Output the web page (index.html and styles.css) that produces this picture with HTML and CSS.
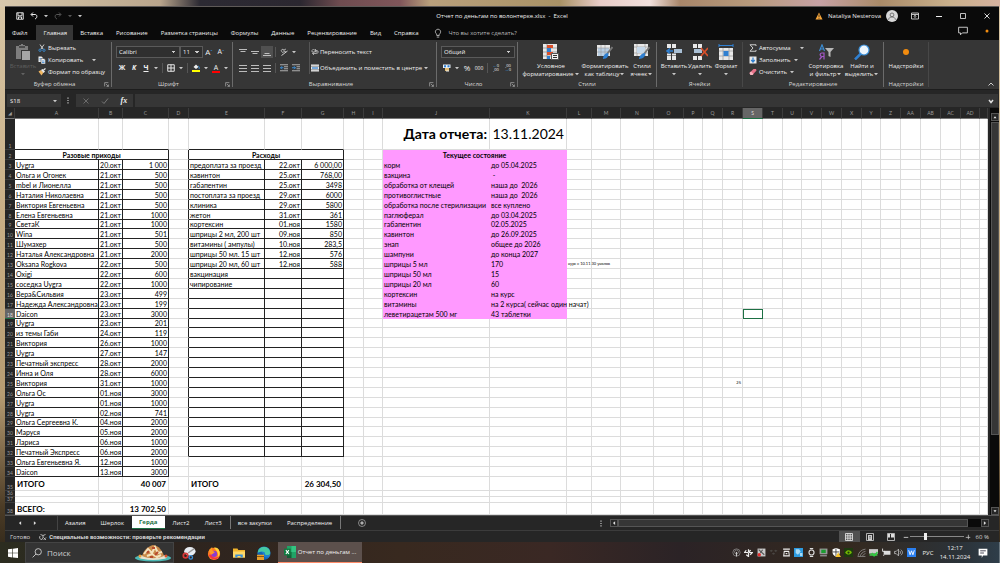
FILE: index.html
```html
<!DOCTYPE html>
<html lang="ru">
<head>
<meta charset="utf-8">
<title>Отчет по деньгам по волонтерке.xlsx - Excel</title>
<link rel="stylesheet" href="styles.css">
</head>
<body>
<svg class="sprite" aria-hidden="true">
  <symbol id="caret" viewBox="0 0 6 4"><path d="M1 1h4L3 3.2z" fill="#c8c8c8"/></symbol>
  <symbol id="save" viewBox="0 0 16 16"><path d="M1.500 1.500h13v13h-13zM4 2v5.500h8V2M5 14v-4h6v4" fill="none" stroke="#eee" stroke-width="1.800"/></symbol>
  <symbol id="undo" viewBox="0 0 16 16"><path d="M6 1L2 5l4 4M2.500 5H10c5 0 5 7 0 9" fill="none" stroke="#eee" stroke-width="2"/></symbol>
  <symbol id="redo" viewBox="0 0 16 16"><path d="M10 1l4 4-4 4M13.500 5H6C1 5 1 12 6 14" fill="none" stroke="#555" stroke-width="2"/></symbol>
  <symbol id="paste" viewBox="0 0 16 16"><path d="M1 2h3V1h2V0h2v1h2v1h3v4H6v9H1z" fill="#7d7d7d"/><path d="M7 7h8v9H7z" fill="#a5a5a5"/><path d="M4 2h6v2H4z" fill="#4a4a4a"/></symbol>
  <symbol id="cut" viewBox="0 0 16 16"><path d="M4 1l6 9M12 1l-6 9" stroke="#ddd" stroke-width="1.800"/><circle cx="4" cy="12.500" r="2.300" fill="none" stroke="#3b8fd8" stroke-width="1.800"/><circle cx="12" cy="12.500" r="2.300" fill="none" stroke="#3b8fd8" stroke-width="1.800"/></symbol>
  <symbol id="copy" viewBox="0 0 16 16"><path d="M1 1h6l3 3v8H1z" fill="#eee"/><path d="M6 5h6l3 3v8H6z" fill="#eee" stroke="#363636"/><path d="M3 5h3M3 8h2M8 10h5M8 13h5" stroke="#2f7fd0" stroke-width="1.500"/></symbol>
  <symbol id="brush" viewBox="0 0 16 16"><path d="M1 7l5-3 5 5-4 6z" fill="#f0b661"/><path d="M6 4l3-2 5 5-3 3z" fill="#eee"/><path d="M11 4l4-3" stroke="#eee" stroke-width="2.500"/></symbol>
  <symbol id="borders" viewBox="0 0 16 16"><path d="M1.500 1.500h13v13h-13zM8 1v14M1 8h14" fill="none" stroke="#e6e6e6" stroke-width="2"/></symbol>
  <symbol id="fill" viewBox="0 0 16 16"><path d="M3 6l5-5 5 5-5 4z" fill="#eee"/><path d="M12 4c3 1 3 4 2 6" stroke="#3b8fd8" stroke-width="2" fill="none"/><path d="M0 12h16v4H0z" fill="#ff0"/></symbol>
  <symbol id="top" viewBox="0 0 16 16"><path d="M0 3h16M3 7h10" stroke="#ccc" stroke-width="1.800"/></symbol>
  <symbol id="mid" viewBox="0 0 16 16"><path d="M0 7h16M3 11h10" stroke="#ccc" stroke-width="1.800"/></symbol>
  <symbol id="bot" viewBox="0 0 16 16"><path d="M3 11h10M0 15h16" stroke="#ccc" stroke-width="1.800"/></symbol>
  <symbol id="lines" viewBox="0 0 16 16"><path d="M0 3h16M0 9h16M0 15h16" stroke="#ccc" stroke-width="1.800"/></symbol>
  <symbol id="outdent" viewBox="0 0 16 16"><path d="M0 1.500h16M8 5.500h8M8 9.500h8M0 13.500h16" stroke="#ccc" stroke-width="1.600"/><path d="M7 7.500H1M4 4.500l-3 3 3 3" stroke="#3b8fd8" stroke-width="2" fill="none"/></symbol>
  <symbol id="indent" viewBox="0 0 16 16"><path d="M0 1.500h16M9 5.500h7M9 9.500h7M0 13.500h16" stroke="#ccc" stroke-width="1.600"/><path d="M0 7.500h7M4 4.500l3 3-3 3" stroke="#3b8fd8" stroke-width="2" fill="none"/></symbol>
  <symbol id="rotate" viewBox="0 0 16 16"><path d="M2 5l4-3 3 5-4 2zM8 4l4-2M9 8l3-1" fill="none" stroke="#ccc" stroke-width="1.500"/><path d="M3 15L15 6" stroke="#ccc" stroke-width="2"/></symbol>
  <symbol id="wrap" viewBox="0 0 16 16"><path d="M2 5l3-3 3 3v3H2zM9 2v6h3V5H9M3 11h8c4 0 4-5 2-6M6 9l-3 2 3 3" fill="none" stroke="#bbb" stroke-width="1.700"/></symbol>
  <symbol id="merge" viewBox="0 0 16 16"><path d="M0 1h16v14H0z" fill="#e8e8e8"/><path d="M0 4.500h16M0 11.500h16" stroke="#444"/><path d="M2 8h12" stroke="#2f7fd0" stroke-width="2.500"/></symbol>
  <symbol id="money" viewBox="0 0 16 16"><path d="M0 1h15v7H0z" fill="#e8f0f8"/><path d="M2 2.500h4v4H2zM9 2.500h4v4H9z" fill="#2f7fd0"/><path d="M4 8h8v6H4z" fill="#e4bd72"/><path d="M6 14h6" stroke="#eee" stroke-width="2"/></symbol>
  <symbol id="condfmt" viewBox="0 0 16 16"><path d="M0 0h14v15H0z" fill="#e8e8e8"/><path d="M0 4h14M0 8h14M0 12h14M4 0v15" stroke="#888" stroke-width=".7"/><path d="M4 1h6v3H4zM4 8h6v3H4z" fill="#d9502b"/><path d="M4 4h4v4H4zM4 12h3v3H4z" fill="#2f7fd0"/><path d="M8.500 9.500h7v6h-7z" fill="#f5f5f5" stroke="#555"/><path d="M10 11.500h4M10 13.500h4" stroke="#333"/></symbol>
  <symbol id="fmttable" viewBox="0 0 16 16"><path d="M0 1h13v11H0z" fill="#e8e8e8"/><path d="M1 4h11v8H1z" fill="#b9cfe4"/><path d="M0 4h13M0 8h13M4 1v11M8 1v11" stroke="#999" stroke-width=".6"/><path d="M15.500 3L10 10" stroke="#777" stroke-width="2"/><path d="M6 15c0-3 2-6 5-6 1 3-1 6-5 6" fill="#2f7fd0"/></symbol>
  <symbol id="cellstyle" viewBox="0 0 16 16"><path d="M0 0h14v12H0z" fill="#e8e8e8"/><path d="M0 3h14M0 9h14M3 0v12M11 0v12" stroke="#999" stroke-width=".7"/><path d="M3 3h8v6H3z" fill="#c5d8ea"/><path d="M15.500 3L10 10" stroke="#777" stroke-width="2"/><path d="M5 15c0-3 3-6 6-6 1 3-2 6-6 6" fill="#2f7fd0"/></symbol>
  <symbol id="insert" viewBox="0 0 16 16"><path d="M1 0h4v4H1zM6 0h4v4H6zM1 12h4v4H1zM6 12h4v4H6zM1 9.500h4v2H1zM6 9.500h4v2H6z" fill="#e8e8e8"/><path d="M8 5h8v4H8z" fill="#a9bfd4"/><path d="M7 7H1M4 4.500L1 7l3 2.500" stroke="#2f7fd0" stroke-width="1.500" fill="none"/></symbol>
  <symbol id="delete" viewBox="0 0 16 16"><path d="M1 0h4v4H1zM6 0h4v4H6zM1 12h4v4H1zM6 12h4v4H6z" fill="#e8e8e8"/><path d="M2 5h8v4H2z" fill="#a9bfd4"/><path d="M9 4l7 8M16 4l-7 8" stroke="#d9502b" stroke-width="1.700"/></symbol>
  <symbol id="format" viewBox="0 0 16 16"><path d="M1 0v3M15 0v3M1 1.500h14" stroke="#2f7fd0"/><path d="M1 4h14v12H1z" fill="#e8e8e8"/><path d="M1 7h14M1 12h14M5 4v12M11 4v12" stroke="#999" stroke-width=".7"/><path d="M5.500 7h5v5h-5z" fill="#2f7fd0"/></symbol>
  <symbol id="sigma" viewBox="0 0 16 16"><path d="M14 4V1.500H2L8 8l-6 6.500h12V12" fill="none" stroke="#ddd" stroke-width="1.800"/></symbol>
  <symbol id="down" viewBox="0 0 16 16"><path d="M1 1h14v14H1z" fill="#e8e8e8"/><path d="M8 3v8M4.500 8L8 12l3.500-4" stroke="#2f7fd0" stroke-width="2.500" fill="none"/></symbol>
  <symbol id="eraser" viewBox="0 0 16 16"><path d="M1 10l8-8h5l1 3-8 9H3z" fill="#e8728a"/><path d="M1 10l3-3 5 5-2 2H3z" fill="#f6b5c0"/></symbol>
  <symbol id="sort" viewBox="0 0 16 16"><path d="M1.500 7L4 .8 6.500 7M2.300 5h3.400" stroke="#3b8fd8" stroke-width="1.100" fill="none"/><path d="M6 15.500V9H4c-2.500 0-2.500 3.500 0 3.500h2M4 12.500l-2.500 3" stroke="#a558c8" stroke-width="1.200" fill="none"/><path d="M7 4h9l-3.500 4v5l-2-1V8z" fill="#b8b8b8"/></symbol>
  <symbol id="find" viewBox="0 0 16 16"><path d="M7.500 9L1 15.500" stroke="#2f7fd0" stroke-width="2.500"/><circle cx="10" cy="6" r="5" fill="#eef6fd" stroke="#3b8fd8" stroke-width="1.200"/></symbol>
  <symbol id="dot" viewBox="0 0 16 16"><circle cx="8" cy="8" r="3" fill="#f28c0f"/></symbol>
  <symbol id="launch" viewBox="0 0 8 8"><path d="M1 7V1h6M3 3l4 4M7 4v3H4" fill="none" stroke="#bbb"/></symbol>
  <symbol id="bulb" viewBox="0 0 16 16"><path d="M6 12v-2c-4-3-2-8 2-8s6 5 2 8v2zM6 14.500h4" fill="none" stroke="#ccc" stroke-width="1.300"/></symbol>
  <symbol id="warn" viewBox="0 0 16 16"><path d="M8 1l7 14H1z" fill="#f7a63a"/><path d="M8 5v5M8 11.500v2" stroke="#222" stroke-width="1.600"/></symbol>
  <symbol id="user" viewBox="0 0 16 16"><circle cx="8" cy="8" r="8" fill="#d8d8d8"/><circle cx="8" cy="6.500" r="2.500" fill="none" stroke="#555"/><path d="M3.500 13c0-5 9-5 9 0" fill="none" stroke="#555"/></symbol>
  <symbol id="ribbonopt" viewBox="0 0 16 16"><path d="M1 2h14v12H1zM1 5h14M8 12V7M5.500 9L8 6.500 10.500 9" fill="none" stroke="#ddd" stroke-width="1.700"/></symbol>
  <symbol id="min" viewBox="0 0 16 16"><path d="M2 9h12" stroke="#eee" stroke-width="2"/></symbol>
  <symbol id="add" viewBox="0 0 16 16"><path d="M2 9h12M9 2v12" stroke="#ccc" stroke-width="2"/></symbol>
  <symbol id="max" viewBox="0 0 16 16"><path d="M3 3h10v10H3z" fill="none" stroke="#eee" stroke-width="1.600"/></symbol>
  <symbol id="close" viewBox="0 0 16 16"><path d="M3 3l10 10M13 3L3 13" stroke="#eee" stroke-width="1.800"/></symbol>
  <symbol id="check" viewBox="0 0 16 16"><path d="M2 9l4 4 8-10" fill="none" stroke="#777" stroke-width="2"/></symbol>
  <symbol id="cross" viewBox="0 0 16 16"><path d="M3 3l10 10M13 3L3 13" stroke="#6b6b6b" stroke-width="2"/></symbol>
  <symbol id="comment" viewBox="0 0 16 16"><path d="M1 2h14v9H7l-3 3v-3H1z" fill="none" stroke="#ddd" stroke-width="1.400"/></symbol>
  <symbol id="vdots" viewBox="0 0 4 12"><path d="M1 1h2v2H1zM1 5h2v2H1zM1 9h2v2H1z" fill="#ccc"/></symbol>
  <symbol id="plus" viewBox="0 0 16 16"><circle cx="8" cy="8" r="7" fill="none" stroke="#bbb" stroke-width="1.300"/><path d="M8 4.500v7M4.500 8h7" stroke="#ddd" stroke-width="2"/></symbol>
  <symbol id="left" viewBox="0 0 8 8"><path d="M5.500 1.500v5L2.500 4z" fill="#ddd"/></symbol>
  <symbol id="right" viewBox="0 0 8 8"><path d="M2.500 1.500v5l3-2.500z" fill="#ddd"/></symbol>
  <symbol id="upt" viewBox="0 0 8 8"><path d="M2 5.500h4L4 3z" fill="#eee"/></symbol>
  <symbol id="dnt" viewBox="0 0 8 8"><path d="M2 3h4L4 5.500z" fill="#eee"/></symbol>
  <symbol id="chevup" viewBox="0 0 8 8"><path d="M1.500 5.500L4 3l2.500 2.500" fill="none" stroke="#ccc"/></symbol>
  <symbol id="chevdn" viewBox="0 0 8 8"><path d="M2 3l2 2.500L6 3" fill="none" stroke="#ddd" stroke-width="1.500"/></symbol>
  <symbol id="access" viewBox="0 0 16 16"><path d="M3 3l5 2 5-2M8 5v4l-3 5M2 6l-1 4 4 4M9 9l5 5M14 9l-5 5" fill="none" stroke="#ddd" stroke-width="1.500"/></symbol>
  <symbol id="vgrid" viewBox="0 0 16 16"><path d="M1 1h14v14H1zM1 5.700h14M1 10.300h14M5.700 1v14M10.300 1v14" fill="none" stroke="#eee" stroke-width="1.600"/></symbol>
  <symbol id="vpage" viewBox="0 0 16 16"><path d="M1 1h14v14H1z" fill="none" stroke="#ddd" stroke-width="1.500"/><path d="M4 4h8v11H4z" fill="#ccc"/><path d="M6 7h4M6 10h4" stroke="#333"/></symbol>
  <symbol id="vbreak" viewBox="0 0 16 16"><path d="M1 1h14v14H1z" fill="none" stroke="#ddd" stroke-width="1.500"/><path d="M2 2h4v7H2zM8 2h6v7H8z" fill="#ddd"/></symbol>
  <symbol id="win" viewBox="0 0 16 16"><path d="M0 2l7-1v6.500H0zM8 1l8-1v7.500H8zM0 8.500h7V15l-7-1zM8 8.500h8V16l-8-1z" fill="#fff"/></symbol>
  <symbol id="lens" viewBox="0 0 16 16"><circle cx="10" cy="6" r="5" fill="none" stroke="#ddd" stroke-width="1.300"/><path d="M6.500 9.500L1 15" stroke="#ddd" stroke-width="1.300"/></symbol>
  <symbol id="dish" viewBox="0 0 36 18"><ellipse cx="18" cy="14" rx="18" ry="3.500" fill="#4cb8b4"/><ellipse cx="18" cy="13" rx="14" ry="3" fill="#e7e2cf"/><path d="M7 12C9 6 12 3 18 1c6 1 9 5 11 11-7 3-15 3-22 0" fill="#c98a4a"/><path d="M9 10l4-5 4 4 3-6 3 6 4-1M12 12l5-2 5 3 4-2" fill="none" stroke="#f4e2bd" stroke-width="2"/><path d="M12 9l2-2M20 11l3-3M17 4h3M15 13h3" stroke="#b74a2d" stroke-width="2"/><circle cx="5" cy="12" r="1.500" fill="#e89b3b"/><circle cx="31" cy="12" r="1.500" fill="#d9502b"/></symbol>
  <symbol id="snip" viewBox="0 0 16 16"><ellipse cx="9" cy="6" rx="6.500" ry="5" fill="#e8ecf2"/><path d="M7 8l7-5" stroke="#999" stroke-width="1.500"/><circle cx="4" cy="11" r="2.500" fill="none" stroke="#d93838" stroke-width="2"/><circle cx="10" cy="13" r="2" fill="none" stroke="#3b8fd8" stroke-width="1.500"/></symbol>
  <symbol id="firefox" viewBox="0 0 16 16"><circle cx="8" cy="9" r="7" fill="#ff7a1f"/><path d="M8 2c6-2 9 8 4 11 2-5-1-7-4-11" fill="#ffd23c"/><circle cx="8" cy="9" r="3.500" fill="#8a3bd1"/><path d="M2 6c1-3 3-4 4-5v4l3 2-4 3" fill="#ff9a24"/><path d="M2 10c2 6 9 7 12 2-3 2-8 2-9-2" fill="#f0304c"/></symbol>
  <symbol id="folder" viewBox="0 0 16 16"><path d="M0 2h6l1 2h9v10H0z" fill="#f3b52c"/><path d="M0 6h16v8H0z" fill="#ffd868"/><path d="M3 14v-4h10v4h-3v-2H6v2z" fill="#3a8fd6"/></symbol>
  <symbol id="edge" viewBox="0 0 16 16"><circle cx="8" cy="8" r="7.500" fill="#1c7fd1"/><path d="M1 8c0-9 14-9 14 0 0 3-5 3-6 1 1-3-5-4-8-1" fill="#45c9a4"/><path d="M1 8c4-3 6 0 6 2s2 4 6 3c-5 5-13 1-12-5" fill="#1262b3"/><path d="M0 10h8v6H0z" fill="#e8a02c"/><path d="M0 12h8" stroke="#7a4a12"/></symbol>
  <symbol id="xl" viewBox="0 0 16 16"><path d="M4 0h12v16H4z" fill="#21a366"/><path d="M10 0h6v8h-6z" fill="#33c481"/><path d="M4 8h6v8H4z" fill="#185c37"/><path d="M0 3.500h9v9H0z" fill="#107c41"/><path d="M2.500 5.500l4 5M6.500 5.500l-4 5" stroke="#fff" stroke-width="1.400"/></symbol>
  <symbol id="t-cast" viewBox="0 0 16 16"><circle cx="8" cy="8" r="6.500" fill="none" stroke="#aaa"/><circle cx="8" cy="7" r="3.500" fill="none" stroke="#aaa"/><path d="M8 7v8" stroke="#ccc" stroke-width="2"/></symbol>
  <symbol id="t-fan" viewBox="0 0 16 16"><path d="M8 2v5l4-3M9 8h6l-4 4M8 9v6l-4-3M7 8H1l3-4" fill="none" stroke="#eee" stroke-width="2.200"/></symbol>
  <symbol id="t-red" viewBox="0 0 16 16"><path d="M1 1h14v14H1z" fill="#c7c7c7"/><path d="M3 3l10 9M10 3l-4 6" stroke="#555" stroke-width="2"/><circle cx="4" cy="12" r="3" fill="#e32c2c"/></symbol>
  <symbol id="t-drop" viewBox="0 0 16 16"><path d="M4 3l3 2-3 2-3-2zM12 3l3 2-3 2-3-2zM8 8l3 2-3 2-3-2z" fill="#4a4643"/></symbol>
  <symbol id="t-at" viewBox="0 0 16 16"><path d="M2 2h12M4 6h8l1 8H3z" fill="none" stroke="#eee" stroke-width="1.800"/><path d="M6.500 9h3v2h-3z" fill="#eee"/></symbol>
  <symbol id="t-globe" viewBox="0 0 16 16"><path d="M0 0h16v16H0z" fill="#2d9be0"/><path d="M3 2h6l3 4-5 6-4-3zM10 9h5v5h-4z" fill="#a9daf5"/></symbol>
  <symbol id="t-watch" viewBox="0 0 16 16"><circle cx="8" cy="8" r="4.500" fill="none" stroke="#ddd" stroke-width="2"/><path d="M5 1h6M5 15h6" stroke="#ddd" stroke-width="2"/></symbol>
  <symbol id="t-pc" viewBox="0 0 16 16"><path d="M1 1h14v10H1z" fill="#9a9a9a"/><path d="M4 3h8v6H4z" fill="#1c9a30"/><path d="M2 12h12v3H2z" fill="#888"/></symbol>
  <symbol id="t-shield" viewBox="0 0 16 16"><path d="M7 0l7 2v6c0 4-4 6-7 7-3-1-6-3-6-7V2z" fill="#fff"/><path d="M7 1v13M1 7h12" stroke="#333" stroke-width="1.500"/><path d="M11 8l5 8H6z" fill="#f6c12c"/></symbol>
  <symbol id="t-nv" viewBox="0 0 16 16"><path d="M0 0h16v16H0z" fill="#1d3a10"/><path d="M2 8c4-6 10-4 12 0-3 5-9 5-12 0" fill="#76b900"/><circle cx="8" cy="8" r="2" fill="#1d3a10"/></symbol>
  <symbol id="t-wifi" viewBox="0 0 16 16"><path d="M2 14C3 7 8 3 15 2M6 14c1-4 4-7 9-8M10 14c1-2 2-3 5-4M1 15h14" fill="none" stroke="#999" stroke-width="1.300"/></symbol>
  <symbol id="t-ok" viewBox="0 0 16 16"><path d="M0 2h16v8H0z" fill="#ccc"/><path d="M1 10h14v4H1z" fill="#47b04b"/><path d="M5 9l4 5 6-7" fill="none" stroke="#2fd042" stroke-width="2.500"/></symbol>
  <symbol id="t-bat" viewBox="0 0 16 16"><path d="M3 5h12v7H3z" fill="#ddd"/><path d="M1 1v5h4M3 12v2" stroke="#eee" stroke-width="1.500" fill="none"/></symbol>
  <symbol id="t-vol" viewBox="0 0 16 16"><path d="M1 6h3l4-4v12L4 10H1zM10 5c2 2 2 4 0 6M12 3c4 3 4 7 0 10" fill="none" stroke="#ccc" stroke-width="1.300"/></symbol>
  <symbol id="t-w" viewBox="0 0 16 16"><path d="M0 0h16v16H0z" fill="#2a7ff0"/><path d="M3 4l2.500 8L8 5l2.500 7L13 4" fill="none" stroke="#fff" stroke-width="1.600"/></symbol>
  <symbol id="t-note" viewBox="0 0 16 16"><path d="M1 1h14v11H8l-2 4v-4H1z" fill="#fff"/><path d="M3.500 4.500h9M3.500 8h6" stroke="#334" stroke-width="1.400"/></symbol>
</svg>

<main class="window">
  <header class="titlebar">
    <div class="quick">
      <button class="tool" aria-label="Сохранить"><svg class="i8"><use href="#save"/></svg></button>
      <button class="tool" aria-label="Отменить"><svg class="i8"><use href="#undo"/></svg></button>
      <button class="drop" aria-label="Список отмены"><svg class="caret"><use href="#caret"/></svg></button>
      <button class="tool" aria-label="Повторить"><svg class="i8"><use href="#redo"/></svg></button>
      <button class="drop dim" aria-label="Список повтора"><svg class="caret"><use href="#caret"/></svg></button>
      <button class="drop" aria-label="Настройка панели"><svg class="caret"><use href="#caret"/></svg></button>
    </div>
    <h1 class="doc-title">Отчет по деньгам по волонтерке.xlsx&nbsp; -&nbsp; Excel</h1>
    <div class="account">
      <svg class="i8"><use href="#warn"/></svg>
      <span>Nataliya Nesterova</span>
      <svg class="i12"><use href="#user"/></svg>
      <div class="winbtns">
        <button aria-label="Параметры ленты"><svg class="i8"><use href="#ribbonopt"/></svg></button>
        <button aria-label="Свернуть"><svg class="i8"><use href="#min"/></svg></button>
        <button aria-label="Развернуть"><svg class="i8"><use href="#max"/></svg></button>
        <button aria-label="Закрыть"><svg class="i8"><use href="#close"/></svg></button>
      </div>
    </div>
  </header>

  <nav class="menu">
    <button>Файл</button><button class="on">Главная</button><button>Вставка</button><button>Рисование</button><button>Разметка страницы</button><button>Формулы</button><button>Данные</button><button>Рецензирование</button><button>Вид</button><button>Справка</button>
    <button class="tell"><svg class="i10"><use href="#bulb"/></svg>Что вы хотите сделать?</button>
    <div class="winbtns push">
      <button aria-label="Примечания"><svg class="i10"><use href="#comment"/></svg></button>
      <button aria-label="Надстройка"><svg class="i8"><use href="#dot"/></svg></button>
    </div>
  </nav>

  <section class="ribbon">
    <div class="group g-clip">
      <div class="body">
        <button class="big off"><svg class="i16"><use href="#paste"/></svg>Вставить<svg class="caret"><use href="#caret"/></svg></button>
        <div class="list">
          <button><svg class="i8"><use href="#cut"/></svg>Вырезать</button>
          <button><svg class="i8"><use href="#copy"/></svg>Копировать <svg class="caret far"><use href="#caret"/></svg></button>
          <button><svg class="i8"><use href="#brush"/></svg>Формат по образцу</button>
        </div>
      </div>
      <div class="cap"><span>Буфер обмена</span><svg class="launch"><use href="#launch"/></svg></div>
    </div>
    <div class="group g-font">
      <div class="body rows">
        <div class="row">
          <select class="combo c-font" aria-label="Шрифт"><option>Calibri</option></select>
          <select class="combo c-size" aria-label="Размер шрифта"><option>11</option></select>
          <button class="tool grow" aria-label="Увеличить">A<sup>ˆ</sup></button>
          <button class="tool shrink" aria-label="Уменьшить">A<sup>ˇ</sup></button>
        </div>
        <div class="row">
          <button class="tool b">Ж</button><button class="tool b it">К</button><button class="tool b un">Ч</button><button class="drop" aria-label="Подчеркивание"><svg class="caret"><use href="#caret"/></svg></button><i class="rule"></i>
          <button class="tool" aria-label="Границы"><svg class="i8"><use href="#borders"/></svg></button><button class="drop" aria-label="Виды границ"><svg class="caret"><use href="#caret"/></svg></button><i class="rule"></i>
          <button class="tool" aria-label="Заливка"><svg class="i8"><use href="#fill"/></svg></button><button class="drop" aria-label="Цвет заливки"><svg class="caret"><use href="#caret"/></svg></button>
          <button class="tool"><span class="redbar">A</span></button><button class="drop" aria-label="Цвет текста"><svg class="caret"><use href="#caret"/></svg></button>
        </div>
      </div>
      <div class="cap"><span>Шрифт</span><svg class="launch"><use href="#launch"/></svg></div>
    </div>
    <div class="group g-align">
      <div class="body">
        <div class="rows alignset">
          <div class="row">
            <button class="tool" aria-label="По верхнему краю"><svg class="i8"><use href="#top"/></svg></button><button class="tool" aria-label="По середине"><svg class="i8"><use href="#mid"/></svg></button><button class="tool on" aria-label="По нижнему краю"><svg class="i8"><use href="#bot"/></svg></button><i class="rule"></i>
            <button class="tool" aria-label="Ориентация"><svg class="i8"><use href="#rotate"/></svg></button><button class="drop" aria-label="Виды ориентации"><svg class="caret"><use href="#caret"/></svg></button>
          </div>
          <div class="row">
            <button class="tool" aria-label="Влево"><svg class="i8"><use href="#lines"/></svg></button><button class="tool" aria-label="По центру"><svg class="i8"><use href="#lines"/></svg></button><button class="tool" aria-label="Вправо"><svg class="i8"><use href="#lines"/></svg></button><i class="rule"></i>
            <button class="tool" aria-label="Уменьшить отступ"><svg class="i8"><use href="#outdent"/></svg></button><button class="tool" aria-label="Увеличить отступ"><svg class="i8"><use href="#indent"/></svg></button>
          </div>
        </div>
        <div class="rows textset">
          <button class="row"><svg class="i8"><use href="#wrap"/></svg>Переносить текст</button>
          <button class="row"><svg class="i8"><use href="#merge"/></svg>Объединить и поместить в центре <svg class="caret"><use href="#caret"/></svg></button>
        </div>
      </div>
      <div class="cap"><span>Выравнивание</span><svg class="launch"><use href="#launch"/></svg></div>
    </div>
    <div class="group g-num">
      <div class="body rows">
        <div class="row"><select class="combo c-num" aria-label="Числовой формат"><option>Общий</option></select></div>
        <div class="row">
          <button class="tool" aria-label="Денежный формат"><svg class="i8"><use href="#money"/></svg></button><button class="drop" aria-label="Валюты"><svg class="caret"><use href="#caret"/></svg></button>
          <button class="tool pct">%</button><button class="tool tiny">000</button><i class="rule"></i>
          <button class="tool dec"><span><b>←</b>0</span><span>,00</span></button><button class="tool dec"><span>,00</span><span><b>→</b>0</span></button>
        </div>
      </div>
      <div class="cap"><span>Число</span><svg class="launch"><use href="#launch"/></svg></div>
    </div>
    <div class="group g-style">
      <div class="body">
        <button class="big w58"><svg class="i16"><use href="#condfmt"/></svg>Условное<span>форматирование<svg class="caret"><use href="#caret"/></svg></span></button>
        <button class="big w48"><svg class="i16"><use href="#fmttable"/></svg>Форматировать<span>как таблицу<svg class="caret"><use href="#caret"/></svg></span></button>
        <button class="big w24"><svg class="i16"><use href="#cellstyle"/></svg>Стили<span>ячеек<svg class="caret"><use href="#caret"/></svg></span></button>
      </div>
      <div class="cap"><span>Стили</span></div>
    </div>
    <div class="group g-cells">
      <div class="body">
        <button class="big w26"><svg class="i16"><use href="#insert"/></svg>Вставить<svg class="caret"><use href="#caret"/></svg></button>
        <button class="big w26"><svg class="i16"><use href="#delete"/></svg>Удалить<svg class="caret"><use href="#caret"/></svg></button>
        <button class="big w26"><svg class="i16"><use href="#format"/></svg>Формат<svg class="caret"><use href="#caret"/></svg></button>
      </div>
      <div class="cap"><span>Ячейки</span></div>
    </div>
    <div class="group g-edit">
      <div class="body">
        <div class="list">
          <button><svg class="i8"><use href="#sigma"/></svg>Автосумма <svg class="caret far"><use href="#caret"/></svg></button>
          <button><svg class="i8"><use href="#down"/></svg>Заполнить<svg class="caret"><use href="#caret"/></svg></button>
          <button><svg class="i8"><use href="#eraser"/></svg>Очистить<svg class="caret"><use href="#caret"/></svg></button>
        </div>
        <button class="big w38"><svg class="i16"><use href="#sort"/></svg>Сортировка<span>и фильтр<svg class="caret"><use href="#caret"/></svg></span></button>
        <button class="big w34"><svg class="i16"><use href="#find"/></svg>Найти и<span>выделить<svg class="caret"><use href="#caret"/></svg></span></button>
      </div>
      <div class="cap"><span>Редактирование</span></div>
    </div>
    <div class="group g-add">
      <div class="body"><button class="big w44"><svg class="i16"><use href="#dot"/></svg>Надстройки</button></div>
      <div class="cap"><span>Надстройки</span></div>
    </div>
    <button class="collapse" aria-label="Свернуть ленту"><svg class="i8"><use href="#chevup"/></svg></button>
  </section>

  <section class="formula">
    <div class="namebox"><input value="S18" aria-label="Имя ячейки"><svg class="caret"><use href="#caret"/></svg></div>
    <svg class="vd"><use href="#vdots"/></svg>
    <div class="fx">
      <button aria-label="Отмена"><svg class="i8"><use href="#cross"/></svg></button>
      <button aria-label="Ввод"><svg class="i8"><use href="#check"/></svg></button>
      <button class="fn">fx</button>
    </div>
    <div class="fbar"><input aria-label="Строка формул"><svg class="i8"><use href="#chevdn"/></svg></div>
  </section>

  <section class="work">
    <div class="sheet"><table id="grid"></table></div>
    <div class="vscroll">
      <button aria-label="Вверх"><svg class="i6"><use href="#upt"/></svg></button>
      <i class="vthumb"></i>
      <button class="end" aria-label="Вниз"><svg class="i6"><use href="#dnt"/></svg></button>
    </div>
  </section>

  <section class="tabs">
    <div class="nav">
      <button aria-label="Предыдущий лист"><svg class="i6"><use href="#left"/></svg></button>
      <button aria-label="Следующий лист"><svg class="i6"><use href="#right"/></svg></button>
    </div>
    <button class="tab">Азалия</button><button class="tab">Шерлок</button><button class="tab on">Герда</button><button class="tab">Лист2</button><button class="tab line">Лист3</button><button class="tab">все закупки</button><button class="tab line">Распределение</button>
    <button class="add" aria-label="Новый лист"><svg class="i8"><use href="#plus"/></svg></button>
    <div class="hwrap">
      <svg class="vd"><use href="#vdots"/></svg>
      <div class="hscroll">
        <button aria-label="Влево"><svg class="i6"><use href="#left"/></svg></button>
        <i class="hthumb"></i>
        <button class="end" aria-label="Вправо"><svg class="i6"><use href="#right"/></svg></button>
      </div>
    </div>
  </section>

  <footer class="status">
    <span>Готово</span>
    <button class="acc"><svg class="i8"><use href="#access"/></svg>Специальные возможности: проверьте рекомендации</button>
    <div class="views">
      <button class="on" aria-label="Обычный"><svg class="i8"><use href="#vgrid"/></svg></button>
      <button aria-label="Разметка"><svg class="i8"><use href="#vpage"/></svg></button>
      <button aria-label="Страничный"><svg class="i8"><use href="#vbreak"/></svg></button>
    </div>
    <div class="zoom">
      <button aria-label="Уменьшить масштаб"><svg class="i6"><use href="#min"/></svg></button>
      <input type="range" min="10" max="300" value="90" aria-label="Масштаб">
      <button aria-label="Увеличить масштаб"><svg class="i6"><use href="#add"/></svg></button>
      <span class="pc">60 %</span>
    </div>
  </footer>
</main>

<footer class="taskbar">
  <button class="start" aria-label="Пуск"><svg class="i10"><use href="#win"/></svg></button>
  <label class="search"><svg class="i10"><use href="#lens"/></svg><input placeholder="Поиск" aria-label="Поиск"><svg class="dish"><use href="#dish"/></svg></label>
  <div class="pins">
    <button aria-label="Ножницы"><svg class="i14"><use href="#snip"/></svg></button>
    <button aria-label="Firefox"><svg class="i14"><use href="#firefox"/></svg></button>
    <button aria-label="Проводник"><svg class="i12"><use href="#folder"/></svg></button>
    <button aria-label="Edge"><svg class="i14"><use href="#edge"/></svg></button>
  </div>
  <button class="app"><svg class="i12"><use href="#xl"/></svg>Отчет по деньгам ...</button>
  <div class="tray">
    <svg><use href="#t-cast"/></svg><svg><use href="#t-fan"/></svg><svg><use href="#t-red"/></svg><svg><use href="#t-drop"/></svg><svg><use href="#t-at"/></svg><svg><use href="#t-globe"/></svg><svg><use href="#t-watch"/></svg><svg><use href="#t-pc"/></svg><svg><use href="#t-shield"/></svg><svg><use href="#t-nv"/></svg><svg><use href="#t-wifi"/></svg><svg><use href="#t-ok"/></svg><svg><use href="#t-bat"/></svg><svg><use href="#t-vol"/></svg><svg><use href="#t-w"/></svg>
  </div>
  <button class="lang">РУС</button>
  <div class="clock"><time>12:17</time><time>14.11.2024</time></div>
  <button class="note" aria-label="Уведомления"><svg class="i10"><use href="#t-note"/></svg></button>
</footer>
<script src="app.js"></script>
</body>
</html>
```
FILE: app.js
```js
const letters = 'A B C D E F G H I J K L M N O P Q R S T U V W X Y Z AA AB AC AD AE'.split(' ');
const widths = [84, 24, 46, 20, 76, 37, 42, 20, 19, 107, 77, 25, 29, 33, 30, 19, 20, 20, 20, 20, 19, 20, 20, 20, 19, 20, 20, 20, 20, 19];

const income = `Uygra|20.окт|1 000
Ольга и Огонек|21.окт|500
mbel и Лионелла|21.окт|500
Наталия Николаевна|21.окт|500
Виктория Евгеньевна|21.окт|500
Елена Евгеньевна|21.окт|1000
СветаК|21.окт|1000
Wina|21.окт|501
Шумахер|21.окт|500
Наталья Александровна|21.окт|2000
Oksana Rogkova|22.окт|500
Oxigi|22.окт|600
соседка Uygra|22.окт|1000
Вера&Сильвия|23.окт|499
Надежда Александровна|23.окт|199
Daicon|23.окт|3000
Uygra|23.окт|201
из темы Габи|24.окт|119
Виктория|26.окт|1000
Uygra|27.окт|147
Печатный экспресс|28.окт|2000
Инна и Оля|28.окт|6000
Виктория|31.окт|1000
Ольга Ос|01.ноя|3000
Uygra|01.ноя|1000
Uygra|02.ноя|741
Ольга Сергеевна К.|04.ноя|2000
Маруся|05.ноя|2000
Лариса|06.ноя|1000
Печатный Экспресс|06.ноя|2000
Ольга Евгеньевна Я.|12.ноя|1000
Daicon|13.ноя|3000`.split('\n').map(s => s.split('|'));

const expenses = `предоплата за проезд|22.окт|6 000,00
кавинтон|25.окт|768,00
габапентин|25.окт|3498
постоплата за проезд|29.окт|6000
клиника|29.окт|5800
жетон|31.окт|361
кортексин|01.ноя|1580
шприцы 2 мл, 200 шт|09.ноя|850
витамины ( ампулы)|10.ноя|283,5
шприцы 50 мл. 15 шт|12.ноя|576
шприцы 20 мл, 60 шт|12.ноя|588
вакцинация||
чипирование||`.split('\n').map(s => s.split('|'));

const stock = `корм|до 05.04.2025
вакцина| -
обработка от клещей|наша до  2026
противоглистные|наша до  2026
обработка после стерилизации|все куплено
паглюферал|до 03.04.2025
габапентин|02.05.2025
кавинтон|до 26.09.2025
энап|общее до 2026
шампуни|до конца 2027
шприцы 5 мл|170
шприцы 50 мл|15
шприцы 20 мл|60
кортексин|на курс
витамины|на 2 курса( сейчас один начат)
леветирацетам 500 мг|43 таблетки`.split('\n').map(s => s.split('|'));

const cells = {};
const put = (ref, text, cls = '', span = 1) => { cells[ref] = { text, cls, span }; };

for (let r = 3; r <= 34; r++) {
  const row = income[r - 3];
  put('A' + r, row[0], 'box'); put('B' + r, row[1], 'box num'); put('C' + r, row[2], 'box num');
}
for (let r = 3; r <= 32; r++) {
  const row = expenses[r - 3] || ['', '', ''];
  put('D' + r, '', 'edge');
  put('E' + r, row[0], 'box'); put('F' + r, row[1], 'box num'); put('G' + r, row[2], 'box num');
}
stock.forEach((row, i) => {
  put('J' + (i + 3), row[0], 'pink'); put('K' + (i + 3), row[1], 'pink');
});
put('A2', 'Разовые приходы', 'box head', 3);
put('D2', '', 'edge');
put('E2', 'Расходы', 'box head', 3);
put('J2', 'Текущее состояние', 'pink head', 2);
['A1', 'B1', 'C1', 'E1', 'F1', 'G1'].forEach(ref => put(ref, '', 'under'));
put('J1', 'Дата отчета:', 'title num bold');
put('K1', '13.11.2024', 'title num');
put('L13', 'курс с 10.11 30 уколов', 'mini');
put('R25', '25', 'mini num');
put('S18', '', 'selected');
put('A35', 'ИТОГО', 'total'); put('C35', '40 007', 'total num');
put('E35', 'ИТОГО', 'total'); put('G35', '26 304,50', 'total num');
put('A38', 'ВСЕГО:', 'total'); put('C38', '13 702,50', 'total num');

const grid = document.getElementById('grid');
const make = (tag, parent, cls) => {
  const el = document.createElement(tag);
  if (cls) el.className = cls;
  parent.append(el);
  return el;
};

const cols = make('colgroup', grid);
make('col', cols, 'rowhead');
letters.forEach((_, i) => {
  const col = make('col', cols);
  if (widths[i]) col.style.width = widths[i] + 'px';
});

const headRow = make('tr', make('thead', grid));
make('th', headRow).textContent = '◢';
letters.forEach(l => { make('th', headRow, l === 'S' ? 'cur' : '').textContent = l === 'AE' ? '' : l; });

const tbody = make('tbody', grid);
for (let r = 1; r <= 38; r++) {
  const tr = make('tr', tbody, 'r' + r);
  make('th', tr, r === 18 ? 'cur' : '').textContent = r;
  for (let c = 0; c < letters.length; c++) {
    const cell = cells[letters[c] + r];
    const td = make('td', tr, cell ? cell.cls : '');
    if (!cell) continue;
    td.textContent = cell.text;
    if (cell.span > 1) { td.colSpan = cell.span; c += cell.span - 1; }
  }
}
```
FILE: styles.css
```css
* { box-sizing: border-box; }
html, body { height: 100%; }
body {
  margin: 0;
  display: flex;
  flex-direction: column;
  overflow: hidden;
  padding-top: 6px;
  font: 6px/8px "Open Sans", "Noto Sans", sans-serif;
  color: #f0f0f0;
  background:
    linear-gradient(90deg, #d8c8ad 0, #c9b79b 8%, #b9a58c 16%, #2c2a33 20%, #2b2730 30%, #6f4c50 34%, #80565a 40%, #b9a07c 43%, #a99266 56%, #e8ccc8 60%, #f1e0dc 65%, #a8866a 68%, #b79a7c 75%, #c7a2a5 82%, #a98a68 88%, #c9b08c 95%, #d7b3a0 100%) top / 100% 7px no-repeat,
    linear-gradient(#d9c7a6, #c7ad84 40%, #b79c72 70%, #4c3c26 90%, #2c2418);
}
button, input, select { font: inherit; color: inherit; background: none; border: 0; padding: 0; margin: 0; outline: 0; border-radius: 0; }
button { display: flex; align-items: center; justify-content: center; white-space: nowrap; }
.sprite { display: none; }
svg { flex: none; display: block; }
.i6 { width: 6px; height: 6px; }
.i8 { width: 8px; height: 8px; }
.i10 { width: 10px; height: 10px; }
.i12 { width: 12px; height: 12px; }
.i14 { width: 14px; height: 14px; }
.i16 { width: 16px; height: 16px; }
.caret { width: 6px; height: 4px; }
.vd { width: 4px; height: 7px; }

.window {
  flex: 1;
  min-height: 0;
  margin: 0 1px 0 5px;
  display: flex;
  flex-direction: column;
  background: #262626;
  border-top: 1px solid #5e5a58;
}
.titlebar { height: 18px; background: #0a0a0a; display: grid; grid-template-columns: 1fr auto 1fr; align-items: center; }
.quick { display: flex; padding-left: 9px; gap: 2px; }
.tool { width: 12px; height: 12px; flex: none; }
.drop { width: 8px; height: 12px; flex: none; }
.dim { opacity: .4; }
.doc-title { margin: 0; font-size: 6px; font-weight: 400; }
.account { display: flex; justify-content: flex-end; align-items: center; gap: 5px; }
.winbtns { display: flex; }
.winbtns button { width: 24px; height: 12px; }

.menu { height: 15px; background: #0a0a0a; display: flex; }
.menu > button { padding: 0 6px 0 7px; }
.menu > .on { background: #363636; }
.menu > button:first-child { padding-right: 9px; }
.menu .tell { margin-left: 2px; gap: 5px; color: #b8b8b8; }
.push { margin-left: auto; }

.ribbon { display: flex; height: 49px; background: #363636; }
.group { display: flex; flex-direction: column; flex: none; border-right: 1px solid #6b6b6b; margin: 2px 0; }
.body { flex: 1; display: flex; align-items: flex-start; }
.cap { display: flex; align-items: center; height: 6px; color: #d6d6d6; }
.cap span { flex: 1; text-align: center; }
.launch { width: 5px; height: 5px; margin-right: 2px; }
.rows { display: flex; flex-direction: column; gap: 4px; padding-top: 4px; }
.row { display: flex; align-items: center; height: 12px; }
.body.rows { padding-left: 4px; align-items: flex-start; }
.list { display: flex; flex-direction: column; }
.list button { height: 12px; justify-content: flex-start; gap: 2px; }
.far { margin-left: 6px; }
.big { flex-direction: column; justify-content: flex-start; padding-top: 2px; width: 30px; }
.big .i16 { margin-bottom: 2px; }
.big span { display: flex; align-items: center; }
.big > .caret { margin-top: 2px; }
.off { color: #5f5f5f; }
.off .caret { opacity: .3; }
.w24 { width: 24px; }
.w26 { width: 26px; }
.w34 { width: 34px; }
.w38 { width: 38px; }
.w44 { width: 44px; }
.w48 { width: 48px; }
.w58 { width: 58px; }
.g-clip { width: 107px; }
.g-clip .body { padding-left: 3px; }
.g-font { width: 121px; }
.g-align { width: 204px; }
.g-align .body { padding-left: 4px; }
.alignset { width: 73px; border-right: 1px solid #555; }
.textset { padding-left: 1px; }
.textset .row { gap: 1px; justify-content: flex-start; }
.g-num { width: 81px; }
.g-style { width: 139px; }
.g-style .body { padding-left: 4px; gap: 1px; }
.g-cells { width: 86px; border-color: #484848; }
.g-cells .body { padding-left: 4px; }
.g-edit { width: 141px; }
.g-edit .body { padding-left: 6px; }
.g-edit .list { width: 58px; }
.g-add { width: 45px; border-color: #484848; }
.rule { width: 5px; height: 10px; background: linear-gradient(#555, #555) center / 1px 100% no-repeat; }
.combo {
  height: 12px;
  padding: 0 2px;
  border: 1px solid #5a5a5a;
  appearance: none;
  background: linear-gradient(45deg, transparent 50%, #ccc 50%) right 5px center / 2px 2px no-repeat, linear-gradient(-45deg, transparent 50%, #ccc 50%) right 3px center / 2px 2px no-repeat, #2f2f2f;
}
.c-font { width: 64px; }
.c-size { width: 23px; }
.c-num { width: 74px; }
.grow { font-size: 8px; }
.shrink { font-size: 7px; }
.tool sup { font-size: 6px; line-height: 1; color: #3b8fd8; }
.b { font-weight: 700; font-size: 7px; }
.it { font-style: italic; }
.un { text-decoration: underline; }
.redbar { border-bottom: 2px solid #f00; width: 8px; line-height: 7px; font-size: 7px; }
.tool.on { background: #505050; }
.pct { font-size: 8px; }
.tiny { font-size: 5px; }
.dec { flex-direction: column; font-size: 4px; line-height: 4px; }
.dec b { color: #3b8fd8; }
.collapse { margin: auto 4px 0 auto; height: 10px; }

.formula { display: flex; align-items: center; height: 19px; padding: 3px 1px 0 2px; border-top: 1px solid #1d1d1d; }
.namebox, .fx, .fbar { height: 13px; display: flex; align-items: center; background: #363636; }
.namebox { width: 54px; padding: 0 3px; }
.namebox input { flex: 1; min-width: 0; }
.formula > .vd { margin: 0 6px 0 5px; }
.fx { width: 57px; justify-content: space-around; }
.fn { font: italic 700 8px/8px "Liberation Serif", serif; }
.fbar { flex: 1; margin-left: 2px; padding-right: 3px; }
.fbar input { flex: 1; }

.work { flex: 1; min-height: 0; display: flex; }
.sheet { flex: 1; min-width: 0; overflow: hidden; background: #fff; color: #000; }
#grid { width: 100%; table-layout: fixed; border-spacing: 0; font: 7px/8px Lato, Roboto, "Open Sans", sans-serif; }
.rowhead { width: 10px; }
#grid td, #grid th { padding: 0 1px; white-space: pre; }
#grid th { background: #262626; color: #9a9a9a; font-size: 5px; font-weight: 400; line-height: 5px; vertical-align: bottom; overflow: hidden; text-align: center; border-bottom: 1px solid #3c3c3c; }
#grid thead th { height: 11px; border-right: 1px solid #3c3c3c; border-bottom-color: #777; padding-bottom: 2px; }
#grid tbody th { padding: 0; }
#grid th.cur { background: #666; color: #ddd; border-bottom-color: #1d7044; }
#grid td { border-right: 1px solid #dcdcdc; border-bottom: 1px solid #dcdcdc; }
tbody tr { height: 10px; }
tbody tr:nth-child(10n+9) { height: 9px; }
tbody .r1 { height: 31px; }
tbody .r35 { height: 14px; }
tbody .r36, tbody .r37 { height: 6px; }
tbody .r38 { height: 12px; }
.r36 td, .r37 td { line-height: 5px; }
#grid .box { border-color: #222; }
#grid .edge { border-right-color: #222; }
#grid .under { border-bottom-color: #222; }
#grid .pink { background: #ff99ff; border-color: #ff99ff; }
.num { text-align: right; }
.head { text-align: center; font-weight: 700; }
.bold { font-weight: 700; }
#grid .title { font-size: 14px; line-height: 18px; padding-right: 2px; }
#grid .total { font-size: 8px; line-height: 10px; font-weight: 700; padding: 0 2px; }
#grid .mini { font-size: 4px; line-height: 5px; }
#grid .selected { outline: 1px solid #1d7044; outline-offset: -1px; }

.vscroll { width: 11px; display: flex; flex-direction: column; align-items: center; background: #0a0a0a; border-left: 2px solid #262626; padding-top: 5px; }
.vscroll button { width: 8px; height: 8px; background: #262626; border: 1px solid #555; }
.vthumb { width: 8px; flex: 1; margin: 1px 0 72px; background: #363636; border: 1px solid #555; }

.tabs { height: 15px; display: flex; border-top: 1px solid #555; }
.nav { width: 53px; padding: 0 15px 0 8px; display: flex; justify-content: space-around; border-right: 1px solid #444; }
.tab { height: 13px; padding: 0 8px 0 7px; }
.tab.on { background: #fff; color: #1d7044; font-weight: 700; border-bottom: 1px solid #1d7044; }
.tab.line { border-right: 1px solid #777; }
.add { width: 42px; }
.hwrap { margin-left: auto; display: flex; align-items: center; gap: 7px; padding-right: 10px; }
.hscroll { width: 379px; height: 8px; display: flex; background: #0a0a0a; }
.hscroll button { width: 8px; border: 1px solid #555; background: #262626; }
.hthumb { flex: 1; margin-right: 13px; background: #363636; border: 1px solid #555; }

.status { height: 12px; display: flex; align-items: center; padding: 0 10px 0 5px; border-top: 1px solid #3c3c3c; color: #d6d6d6; }
.acc { margin-left: 9px; gap: 2px; font-family: Roboto, "Open Sans", sans-serif; font-weight: 700; }
.views { margin-left: auto; display: flex; }
.views button { width: 21px; height: 11px; }
.views .on { background: #505050; }
.zoom { display: flex; align-items: center; margin-left: 1px; }
.zoom input { appearance: none; width: 54px; height: 7px; margin: 0 1px; background: linear-gradient(#888, #888) center / 100% 1px no-repeat; }
.zoom input::-webkit-slider-thumb { appearance: none; width: 3px; height: 7px; background: #eee; }
.pc { margin-left: 5px; }

.taskbar { height: 21px; display: flex; align-items: center; background: linear-gradient(90deg, #2c2d20, #2b231e 14%, #38291f 40%, #3a2824 55%, #2b2326 68%, #34291f 85%, #2b3238 96%, #2f3e4a); }
.start { width: 25px; height: 21px; }
.search { width: 149px; height: 21px; display: flex; align-items: center; gap: 5px; padding: 0 2px 0 6px; background: #343434; border: 1px solid #444; }
.search input { flex: 1; min-width: 0; font-size: 8px; }
.search input::placeholder { color: #ccc; opacity: 1; }
.dish { width: 36px; height: 18px; }
.pins { display: flex; padding: 0 2px; }
.pins button { width: 25px; height: 21px; }
.app { width: 84px; height: 21px; gap: 2px; background: #5c504c; border-bottom: 1px solid #ff8c69; }
.tray { margin-left: auto; display: grid; grid-template-columns: repeat(7, 12px 13px) 12px; }
.tray svg { width: 9px; height: 9px; margin: 0 2px; }
.lang { width: 22px; }
.clock { width: 32px; display: flex; flex-direction: column; align-items: center; line-height: 9px; }
.note { width: 29px; height: 21px; padding-right: 5px; border-right: 1px solid #68747c; }
```
